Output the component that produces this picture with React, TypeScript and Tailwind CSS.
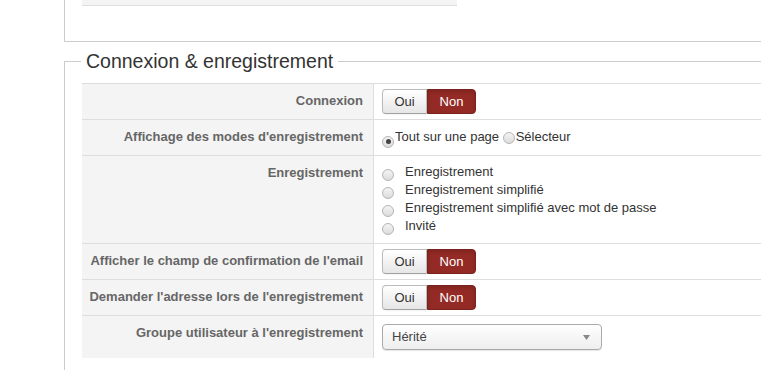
import React from 'react';

const Radio: React.FC<{ checked?: boolean }> = ({ checked }) => (
  <span className="inline-flex w-[12px] h-[12px] rounded-full border border-[#b5b5b5] bg-gradient-to-b from-[#f4f4f4] to-[#dcdcdc] items-center justify-center align-[-3px] shrink-0">
    {checked && <span className="w-[5px] h-[5px] rounded-full bg-[#444]" />}
  </span>
);

const Toggle: React.FC = () => (
  <div className="flex h-[25px] text-[13px]">
    <span className="w-[45px] flex items-center justify-center rounded-l-[4px] border border-[#bbb] border-b-[#a2a2a2] bg-gradient-to-b from-white to-[#e6e6e6] text-[#333] shadow-[0_1px_2px_rgba(0,0,0,0.05)]">
      Oui
    </span>
    <span className="w-[49px] flex items-center justify-center rounded-r-[4px] border border-[#7a221e] bg-[#942a25] text-white shadow-[inset_0_2px_4px_rgba(0,0,0,0.15)]">
      Non
    </span>
  </div>
);

const Row: React.FC<{ label: string; valuePad?: string; children: React.ReactNode }> = ({
  label,
  valuePad = 'pt-[5px]',
  children,
}) => (
  <div className="flex border-t border-[#ddd]">
    <div className="w-[292px] shrink-0 bg-[#f4f4f4] border-r border-[#ddd] pt-[8px] pb-[9px] pr-[10px] text-right font-bold text-[#666] leading-[18px]">
      {label}
    </div>
    <div className={`flex-1 pl-[8px] ${valuePad}`}>{children}</div>
  </div>
);

const registrationModes = [
  'Enregistrement',
  'Enregistrement simplifié',
  'Enregistrement simplifié avec mot de passe',
  'Invité',
];

export default function App() {
  return (
    <div className="w-[761px] h-[370px] overflow-hidden bg-white pl-[64px] font-['Liberation_Sans',Arial,sans-serif] text-[13px] text-[#333]">
      {/* previous section, cut off at the top */}
      <div className="w-[800px] h-[42px] border-l border-b border-[#ccc] pl-[17px]">
        <div className="w-[375px] h-[6px] bg-[#f4f4f4] border-b border-[#ddd]" />
      </div>

      <fieldset className="w-[800px] mt-[6px] border-l border-t border-[#ccc] pl-[17px] pt-[9px] min-h-[400px]">
        <legend className="-ml-[1px] px-[5px] text-[19.5px] leading-[26px] text-[#333]">
          Connexion &amp; enregistrement
        </legend>

        <div className="w-[700px]">
          <Row label="Connexion">
            <Toggle />
          </Row>

          <Row label="Affichage des modes d'enregistrement" valuePad="pt-[8px]">
            <div className="leading-[18px] whitespace-nowrap">
              <Radio checked />
              <span className="ml-[1px]">Tout sur une page</span>{' '}
              <Radio />
              <span className="ml-[1px]">Sélecteur</span>
            </div>
          </Row>

          <Row label="Enregistrement" valuePad="pt-[7px] pb-[8px]">
            <div className="flex flex-col">
              {registrationModes.map((mode) => (
                <div key={mode} className="flex items-center h-[18px] leading-[18px]">
                  <span className="mt-[3px]">
                    <Radio />
                  </span>
                  <span className="ml-[11px]">{mode}</span>
                </div>
              ))}
            </div>
          </Row>

          <Row label="Afficher le champ de confirmation de l'email">
            <Toggle />
          </Row>

          <Row label="Demander l'adresse lors de l'enregistrement">
            <Toggle />
          </Row>

          <Row label="Groupe utilisateur à l'enregistrement" valuePad="pt-[8px] pb-[8px]">
            <div className="relative w-[220px] h-[26px] rounded-[4px] border border-[#aaa] bg-gradient-to-b from-white via-[#f6f6f6] to-[#eee] shadow-[0_1px_1px_rgba(0,0,0,0.1)] flex items-center pl-[9px] text-[#444]">
              Hérité
              <svg className="absolute right-[11px] top-[10px]" width="7" height="5" viewBox="0 0 7 5">
                <path d="M0 0 H7 L3.5 5 Z" fill="#888" />
              </svg>
            </div>
          </Row>
        </div>
      </fieldset>
    </div>
  );
}
